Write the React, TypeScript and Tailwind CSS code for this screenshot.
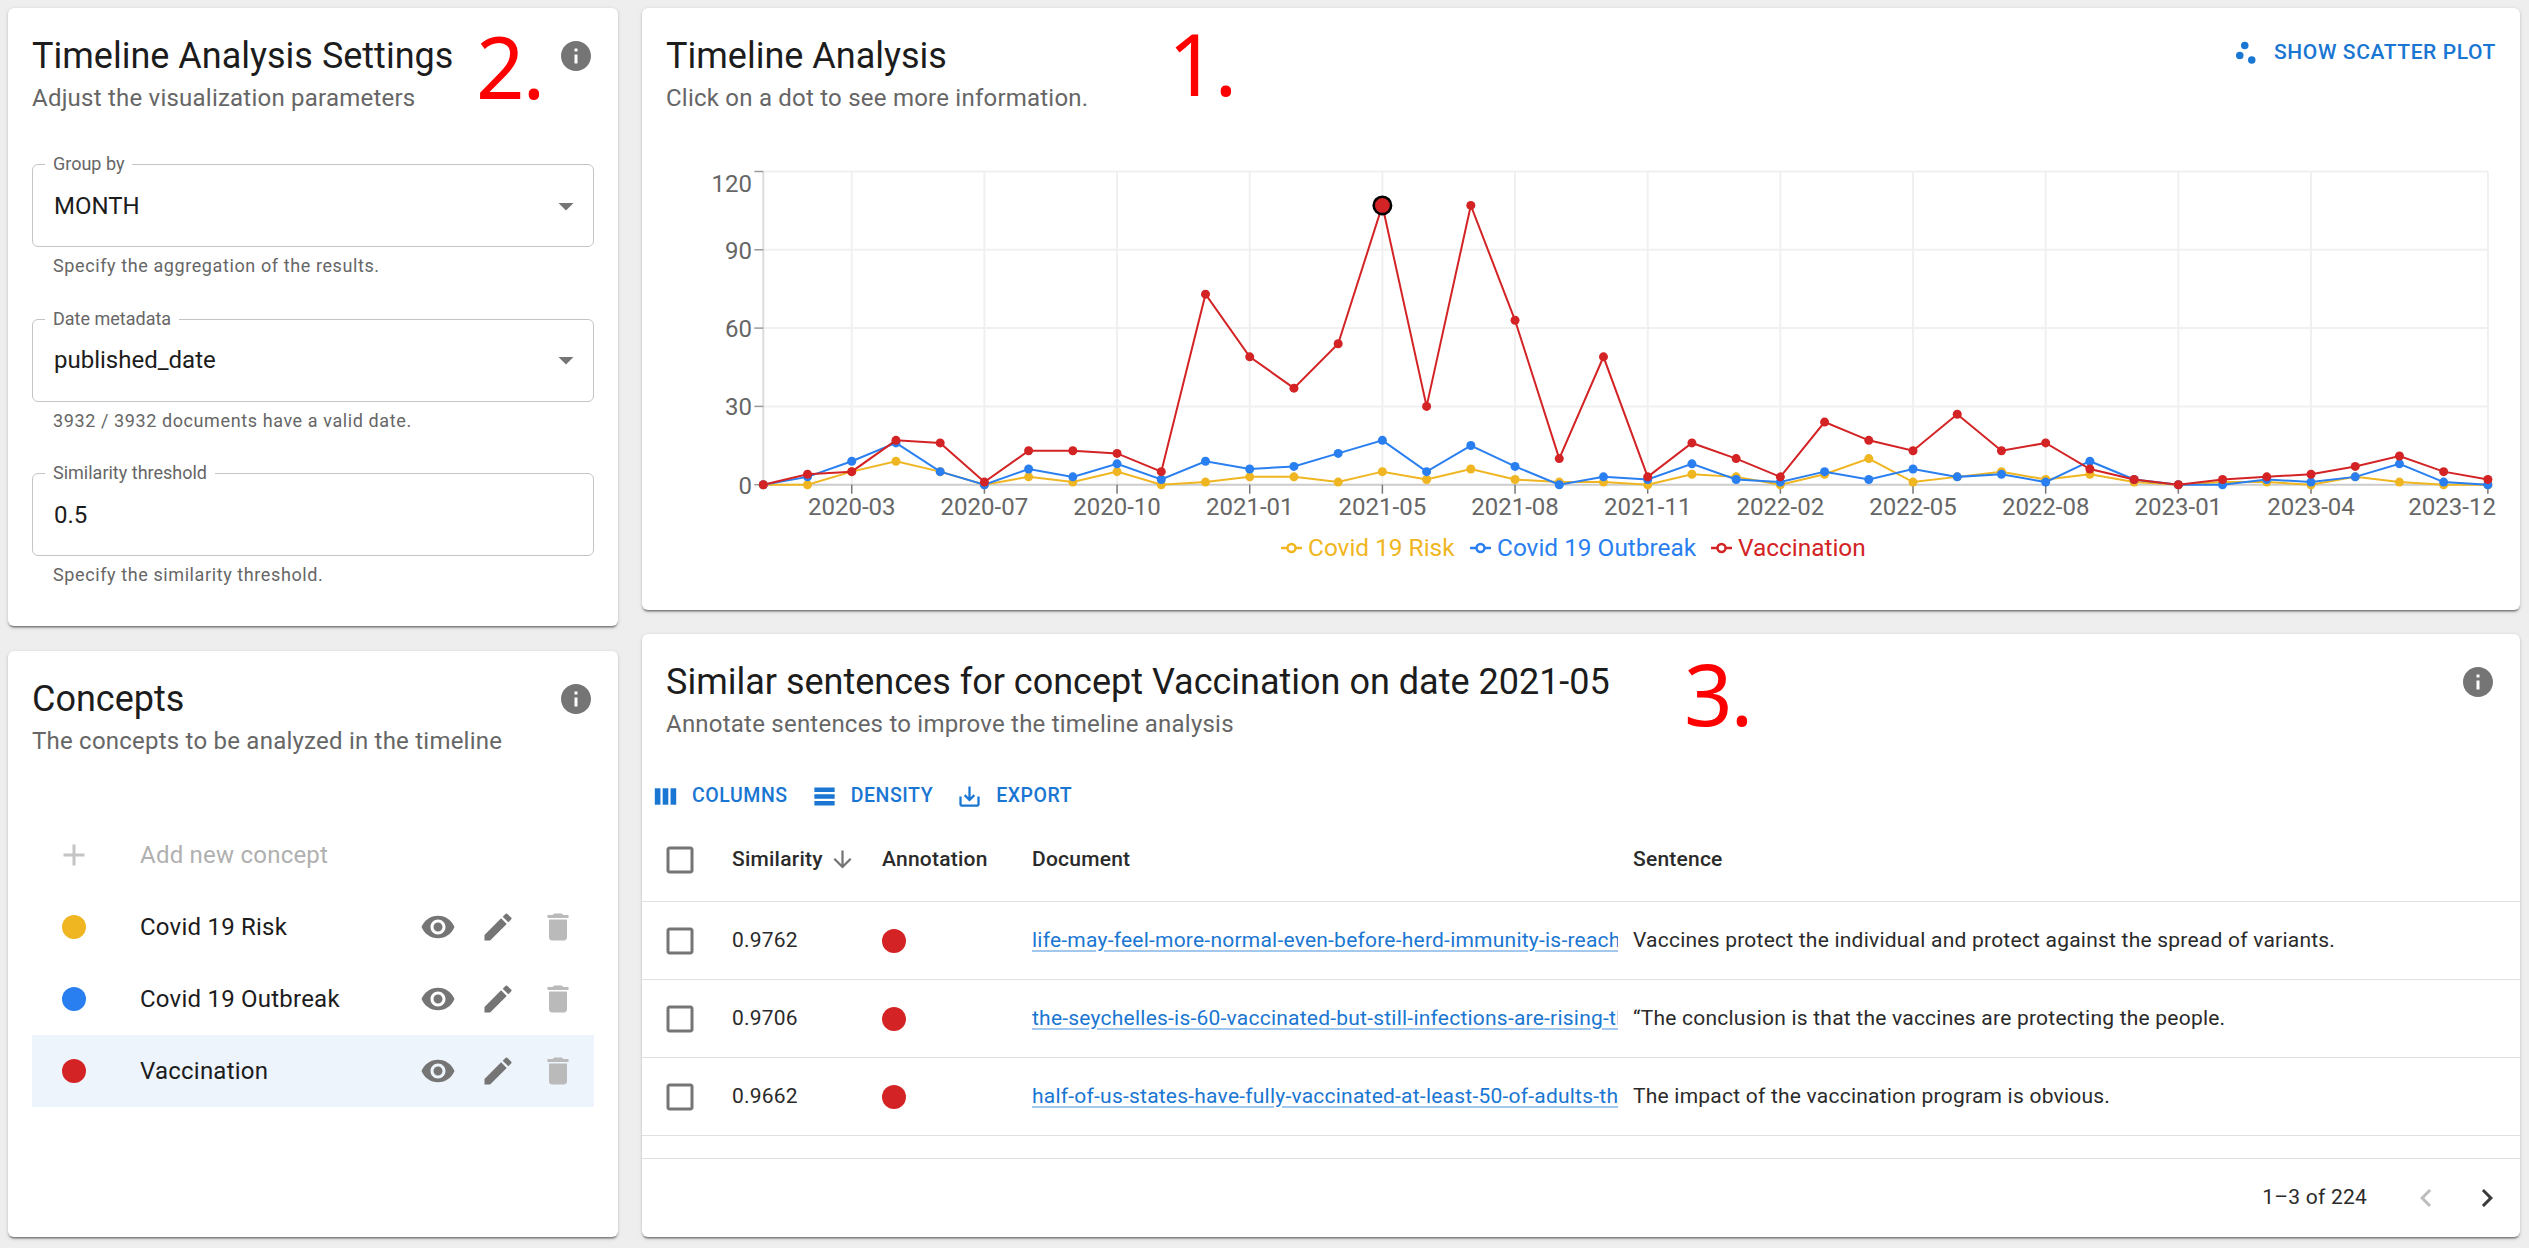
import React from 'react';
import {
  MdInfo,
  MdArrowDropDown,
  MdVisibility,
  MdEdit,
  MdDelete,
  MdAdd,
  MdSaveAlt,
  MdArrowDownward,
  MdChevronLeft,
  MdChevronRight,
  MdCheckBoxOutlineBlank,
} from 'react-icons/md';

const YELLOW = '#f0b621';
const BLUE = '#2a7ff0';
const RED = '#d32325';

const vaccination = [0, 4, 5, 17, 16, 1, 13, 13, 12, 5, 73, 49, 37, 54, 107, 30, 107, 63, 10, 49, 3, 16, 10, 3, 24, 17, 13, 27, 13, 16, 6, 2, 0, 2, 3, 4, 7, 11, 5, 2];
const outbreak = [0, 3, 9, 16, 5, 0, 6, 3, 8, 2, 9, 6, 7, 12, 17, 5, 15, 7, 0, 3, 2, 8, 2, 1, 5, 2, 6, 3, 4, 1, 9, 2, 0, 0, 2, 1, 3, 8, 1, 0];
const risk = [0, 0, 5, 9, 5, 0, 3, 1, 5, 0, 1, 3, 3, 1, 5, 2, 6, 2, 1, 1, 0, 4, 3, 0, 4, 10, 1, 3, 5, 2, 4, 1, 0, 1, 1, 0, 3, 1, 0, 0];

const xTicks: [number, string][] = [
  [2, '2020-03'],
  [5, '2020-07'],
  [8, '2020-10'],
  [11, '2021-01'],
  [14, '2021-05'],
  [17, '2021-08'],
  [20, '2021-11'],
  [23, '2022-02'],
  [26, '2022-05'],
  [29, '2022-08'],
  [32, '2023-01'],
  [35, '2023-04'],
  [39, '2023-12'],
];

// chart coordinates are local to the svg, which starts 130px down the card
const px = (i: number) => 121.3 + i * 44.22;
const py = (v: number) => 354.7 - v * 2.61;

const Timeline = () => {
  const series = [
    { data: risk, color: YELLOW },
    { data: outbreak, color: BLUE },
    { data: vaccination, color: RED },
  ];
  return (
    <svg width="1878" height="460" className="block mt-[14px]">
      {[30, 60, 90, 120].map((v) => (
        <line key={v} x1={px(0)} x2={px(39)} y1={py(v)} y2={py(v)} stroke="#f0f0f0" strokeWidth="2" />
      ))}
      {xTicks.map(([i]) => (
        <line key={i} x1={px(i)} x2={px(i)} y1={py(120)} y2={py(0)} stroke="#f0f0f0" strokeWidth="2" />
      ))}
      <line x1={px(0)} x2={px(0)} y1={py(120)} y2={py(0)} stroke="#dcdcdc" strokeWidth="2" />
      <line x1={px(0)} x2={px(39)} y1={py(0)} y2={py(0)} stroke="#cccccc" strokeWidth="2" />
      {[0, 30, 60, 90, 120].map((v) => (
        <line key={v} x1={px(0) - 9} x2={px(0)} y1={py(v)} y2={py(v)} stroke="#999999" strokeWidth="1.5" />
      ))}
      {xTicks.map(([i]) => (
        <line key={i} x1={px(i)} x2={px(i)} y1={py(0)} y2={py(0) + 9} stroke="#777777" strokeWidth="1.5" />
      ))}
      {[0, 30, 60, 90, 120].map((v) => (
        <text key={v} x="110" y={v === 120 ? py(120) + 20 : py(v) + 9} textAnchor="end" fontSize="24" fill="#666666">
          {v}
        </text>
      ))}
      {xTicks.map(([i, label]) => (
        <text key={label} x={i === 39 ? px(39) + 8 : px(i)} y="385" textAnchor={i === 39 ? 'end' : 'middle'} fontSize="24" fill="#666666">
          {label}
        </text>
      ))}
      {series.map((s) => (
        <g key={s.color}>
          <polyline points={s.data.map((v, i) => `${px(i)},${py(v)}`).join(' ')} fill="none" stroke={s.color} strokeWidth="2" />
          {s.data.map((v, i) => (
            <circle key={i} cx={px(i)} cy={py(v)} r="4.5" fill={s.color} />
          ))}
        </g>
      ))}
      <circle cx={px(14)} cy={py(107)} r="8.7" fill={RED} stroke="#000000" strokeWidth="2.6" />
      {[
        { x: 639, label: 'Covid 19 Risk', color: YELLOW },
        { x: 828, label: 'Covid 19 Outbreak', color: BLUE },
        { x: 1069, label: 'Vaccination', color: RED },
      ].map((l) => (
        <g key={l.label}>
          <line x1={l.x} x2={l.x + 21} y1="418" y2="418" stroke={l.color} strokeWidth="2.5" />
          <circle cx={l.x + 10.5} cy="418" r="4" fill="#ffffff" stroke={l.color} strokeWidth="2.5" />
          <text x={l.x + 27} y="426" fontSize="24.4" fill={l.color}>
            {l.label}
          </text>
        </g>
      ))}
    </svg>
  );
};

const Card = ({ className, children }: { className: string; children: React.ReactNode }) => (
  <div className={`relative bg-white rounded-[6px] shadow-[0_3px_1.5px_-2px_rgba(0,0,0,0.3),0_1.5px_1.5px_0_rgba(0,0,0,0.2),0_1.5px_4px_0_rgba(0,0,0,0.12)] ${className}`}>
    {children}
  </div>
);

const Header = ({ title, sub, action }: { title: string; sub: string; action?: React.ReactNode }) => (
  <div className="flex justify-between pt-[24px] px-6">
    <div>
      <div className="text-[36px] leading-[48px] text-[#1c1c1c] whitespace-nowrap">{title}</div>
      <div className="text-[24px] leading-[36px] tracking-[0.00938em] text-[#666666] whitespace-nowrap">{sub}</div>
    </div>
    {action ?? <MdInfo size={36} className="mt-[6px] text-[#757575]" />}
  </div>
);

const Field = ({ label, value, helper, select }: { label: string; value: string; helper: string; select?: boolean }) => (
  <div>
    <div className="relative h-[83px] flex items-center justify-between pl-[21px] pr-[9px] border border-[#c4c4c4] rounded-[6px]">
      <span className="absolute -top-[13px] left-[12px] px-2 bg-white text-[18px] leading-[24px] text-[#666666]">{label}</span>
      <span className="text-[24px] text-[#1c1c1c]">{value}</span>
      {select && <MdArrowDropDown size={36} className="text-[#757575]" />}
    </div>
    <div className="mt-1 pl-[21px] text-[18px] leading-[30px] tracking-[0.03333em] text-[#666666]">{helper}</div>
  </div>
);

const ConceptRow = ({ color, name, active }: { color: string; name: string; active?: boolean }) => (
  <div className={`flex items-center h-[72px] ${active ? 'bg-[#edf4fc]' : ''}`}>
    <div className="w-[84px] flex justify-center">
      <div className="w-[24px] h-[24px] rounded-full" style={{ backgroundColor: color }} />
    </div>
    <div className="flex-1 pl-6 text-[24px] tracking-[0.00938em] text-[#1c1c1c]">{name}</div>
    <div className="flex pr-[6px]">
      <div className="w-[60px] flex justify-center"><MdVisibility size={36} className="text-[#757575]" /></div>
      <div className="w-[60px] flex justify-center"><MdEdit size={36} className="text-[#757575]" /></div>
      <div className="w-[60px] flex justify-center"><MdDelete size={36} className="text-[#bababa]" /></div>
    </div>
  </div>
);

const ToolButton = ({ icon, label }: { icon: React.ReactNode; label: string }) => (
  <div className="flex items-center gap-[13px] text-[#1976d2]">
    {icon}
    <span className="text-[19.5px] font-medium tracking-[0.02857em]">{label}</span>
  </div>
);

const rows = [
  {
    score: '0.9762',
    doc: 'life-may-feel-more-normal-even-before-herd-immunity-is-reached',
    sentence: 'Vaccines protect the individual and protect against the spread of variants.',
  },
  {
    score: '0.9706',
    doc: 'the-seychelles-is-60-vaccinated-but-still-infections-are-rising-this',
    sentence: '“The conclusion is that the vaccines are protecting the people.',
  },
  {
    score: '0.9662',
    doc: 'half-of-us-states-have-fully-vaccinated-at-least-50-of-adults-this',
    sentence: 'The impact of the vaccination program is obvious.',
  },
];

const Marker = ({ className, children }: { className: string; children: string }) => (
  <div className={`absolute text-[#ff0000] text-[85px] tracking-[-2px] leading-none font-['Noto_Sans',sans-serif] pointer-events-none ${className}`}>{children}</div>
);

export default function App() {
  return (
    <div className="w-[2529px] h-[1248px] overflow-hidden flex gap-6 pt-2 pl-2 bg-[#eeeeee] font-[Roboto,sans-serif]">
      <div className="w-[610px] flex flex-col gap-[25px]">
        <Card className="h-[618px]">
          <Header title="Timeline Analysis Settings" sub="Adjust the visualization parameters" />
          <Marker className="left-[468px] top-[16px]">2.</Marker>
          <div className="mt-[48px] px-6 flex flex-col gap-[37.5px]">
            <Field label="Group by" value="MONTH" helper="Specify the aggregation of the results." select />
            <Field label="Date metadata" value="published_date" helper="3932 / 3932 documents have a valid date." select />
            <Field label="Similarity threshold" value="0.5" helper="Specify the similarity threshold." />
          </div>
        </Card>
        <Card className="h-[586px]">
          <Header title="Concepts" sub="The concepts to be analyzed in the timeline" />
          <div className="mt-[60px] mx-6">
            <div className="flex items-center h-[72px]">
              <div className="w-[84px] flex justify-center">
                <MdAdd size={36} className="text-[#c4c4c4]" />
              </div>
              <div className="pl-6 text-[24px] tracking-[0.00938em] text-[#b0b0b0]">Add new concept</div>
            </div>
            <ConceptRow color={YELLOW} name="Covid 19 Risk" />
            <ConceptRow color={BLUE} name="Covid 19 Outbreak" />
            <ConceptRow color={RED} name="Vaccination" active />
          </div>
        </Card>
      </div>

      <div className="w-[1878px] flex flex-col gap-6">
        <Card className="h-[602px]">
          <Header
            title="Timeline Analysis"
            sub="Click on a dot to see more information."
            action={
              <div className="flex items-center gap-[13px] h-[36px] mt-[3px] text-[#1976d2]">
                <svg width="30" height="30" viewBox="0 0 24 24" fill="currentColor">
                  <circle cx="7" cy="14" r="3" />
                  <circle cx="11" cy="6" r="3" />
                  <circle cx="16.6" cy="17.6" r="3" />
                </svg>
                <span className="text-[21px] font-medium tracking-[0.02857em] whitespace-nowrap">SHOW SCATTER PLOT</span>
              </div>
            }
          />
          <Marker className="left-[526px] top-[13px]">1.</Marker>
          <Timeline />
        </Card>

        <Card className="h-[603px]">
          <Header title="Similar sentences for concept Vaccination on date 2021-05" sub="Annotate sentences to improve the timeline analysis" />
          <Marker className="left-[1042px] top-[17px]">3.</Marker>
          <div className="flex items-center gap-[23px] h-[44px] mt-[32px] pl-[10px]">
            <ToolButton
              label="COLUMNS"
              icon={
                <svg width="27" height="27" viewBox="0 0 24 24" fill="currentColor">
                  <rect x="2.5" y="4.7" width="5" height="14.6" />
                  <rect x="9.5" y="4.7" width="5" height="14.6" />
                  <rect x="16.5" y="4.7" width="5" height="14.6" />
                </svg>
              }
            />
            <ToolButton
              label="DENSITY"
              icon={
                <svg width="27" height="27" viewBox="0 0 24 24" fill="currentColor">
                  <path d="M21 8H3V4h18v4zm0 2H3v4h18v-4zm0 6H3v4h18v-4z" />
                </svg>
              }
            />
            <ToolButton label="EXPORT" icon={<MdSaveAlt size={27} />} />
          </div>

          <div className="flex items-center h-[84px] border-b border-[#e0e0e0] text-[21px] font-medium tracking-[0.01071em] text-[#2a2a2a]">
            <div className="w-[75px] flex justify-center"><MdCheckBoxOutlineBlank size={36} className="text-[#757575]" /></div>
            <div className="w-[150px] pl-[15px] flex items-center gap-[6px]">
              Similarity
              <MdArrowDownward size={27} className="text-[#757575]" />
            </div>
            <div className="w-[150px] pl-[15px]">Annotation</div>
            <div className="w-[616px] pl-[15px]">Document</div>
            <div>Sentence</div>
          </div>
          {rows.map((r) => (
            <div key={r.score} className="flex items-center h-[78px] border-b border-[#e0e0e0] text-[21px] tracking-[0.01071em] text-[#2a2a2a]">
              <div className="w-[75px] flex justify-center"><MdCheckBoxOutlineBlank size={36} className="text-[#757575]" /></div>
              <div className="w-[150px] pl-[15px]">{r.score}</div>
              <div className="w-[150px] pl-[15px]">
                <div className="w-[24px] h-[24px] rounded-full bg-[#d32325]" />
              </div>
              <div className="w-[601px] pl-[15px] overflow-hidden whitespace-nowrap text-[#1976d2] underline decoration-[#a3c8ed] underline-offset-[3px]">{r.doc}</div>
              <div className="pl-[15px] whitespace-nowrap">{r.sentence}</div>
            </div>
          ))}
          <div className="h-[23px] border-b border-[#e0e0e0]" />
          <div className="flex items-center justify-end h-[78px] pr-[15px] text-[#2a2a2a]">
            <span className="text-[21px] tracking-[0.01071em] mr-[41px]">1–3 of 224</span>
            <MdChevronLeft size={36} className="text-[#bdbdbd] mr-[25px]" />
            <MdChevronRight size={36} className="text-[#3a3a3a]" />
          </div>
        </Card>
      </div>
    </div>
  );
}
